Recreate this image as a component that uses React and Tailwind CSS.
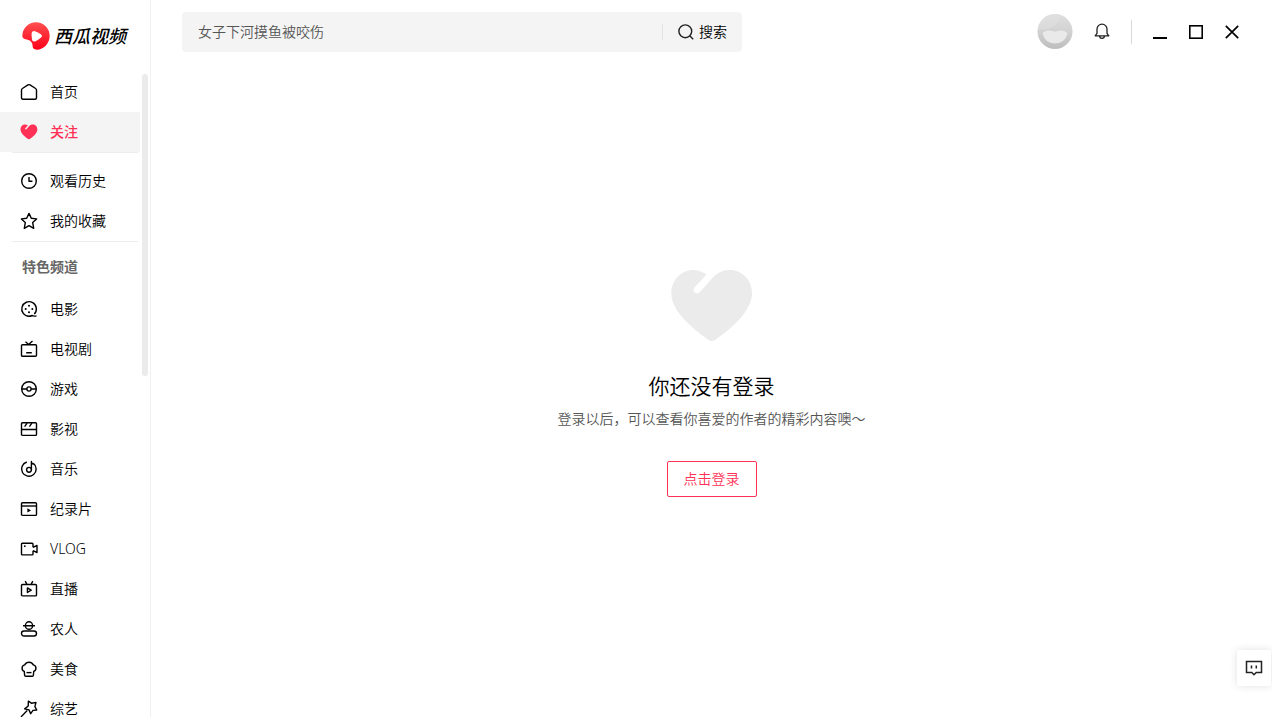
import React, { useState } from "react";

const HEART_PATH =
  "M35.5 5.5C31 2.5 27 1 22.5 1C10 1 .3 11 .3 24.5C.3 42 22 60 37.5 71Q40.7 73 44 71C60 60 81 42 81 24.5C81 11 71.5 1 58.5 1C51 1 46 4 41 9.5L28.5 23.5Q26.3 25.5 24 23.8Q21.5 21.5 23.3 18.8Z";

const icons = {
  home: (
    <path d="M1.5 7.1q0-1.1.9-1.6L8 1.9q1-.6 2 0l5.6 3.6q.9.5.9 1.6v7.6q0 1.5-1.5 1.5H3q-1.5 0-1.5-1.5z" />
  ),
  history: (
    <>
      <circle cx="9" cy="9" r="7.3" />
      <path d="M9 5v4.3h3.4" />
    </>
  ),
  star: (
    <path d="M9 1.4l2.3 4.8 5.3.7-3.9 3.7 1 5.7L9 13.6l-4.7 2.7 1-5.7L1.4 6.9l5.3-.7z" />
  ),
  movie: (
    <>
      <path d="M14.3 14.1a7.3 7.3 0 1 0-5.3 2.2q1.6 0 3.2-.8q1.2.9 4.3.4" />
      <g fill="currentColor" stroke="none">
        <circle cx="9" cy="5.7" r="1" />
        <circle cx="5.7" cy="9" r="1" />
        <circle cx="12.3" cy="9" r="1" />
        <circle cx="9" cy="12.3" r="1" />
      </g>
    </>
  ),
  tv: (
    <>
      <rect x="1.5" y="4.7" width="15" height="11.6" rx="1" />
      <path d="M5.5 1.7L8.7 4.6L12.5 1M6.2 12.7h5.6" />
    </>
  ),
  game: (
    <>
      <circle cx="9" cy="9" r="7.3" />
      <circle cx="9" cy="9" r="2.1" />
      <path d="M1.7 9h5.2M11.1 9h5.2" />
    </>
  ),
  film: (
    <>
      <rect x="1.5" y="2.7" width="15" height="12.7" rx="1" />
      <path d="M1.5 9.5h15M4.6 6.6l2.5-3.5M9.4 6.6l2.5-3.5" />
    </>
  ),
  music: (
    <>
      <path d="M6.8 2A7.3 7.3 0 1 0 13.3 3.2" />
      <circle cx="9" cy="9.8" r="2.4" />
      <path d="M11.4 9.8V1.5q.1 2.3 2.4 2.7" />
    </>
  ),
  documentary: (
    <>
      <rect x="1.5" y="2.7" width="15" height="12.7" rx="1" />
      <path d="M1.5 6h15" />
      <path d="M7.4 8.3l3.6 2.1-3.6 2.1z" fill="currentColor" stroke="none" />
    </>
  ),
  vlog: (
    <>
      <path d="M13 7.3V4.2q0-.9-.9-.9H2.4q-.9 0-.9.9v9.8q0 .9.9.9h9.7q.9 0 .9-.9v-3.3M13 7.3l4-1.8v7L13 10.7" />
      <circle cx="4.8" cy="6.2" r=".9" fill="currentColor" stroke="none" />
    </>
  ),
  live: (
    <>
      <rect x="1.5" y="4.5" width="15" height="11.4" rx="1" />
      <path d="M5.2 1.2l1.6 3M12.8 1.2l-1.6 3M7.4 7.9l3.8 2.3-3.8 2.3z" />
    </>
  ),
  farmer: (
    <>
      <path d="M5.4 5.7a3.6 3.9 0 0 1 7.2 0a3.6 3.6 0 0 1-7.2 0M3 5.7h12" />
      <rect x="1.5" y="11" width="15" height="5" rx="2.5" />
    </>
  ),
  food: (
    <>
      <path d="M4.3 11.4A3.4 3.4 0 0 1 4.7 4.9A4.8 4.8 0 0 1 13.3 4.9A3.4 3.4 0 0 1 13.7 11.4L13.4 15.2q-.1 1-1.1 1H5.7q-1 0-1.1-1z" />
      <path d="M6.5 12.6h5" />
    </>
  ),
  variety: (
    <path d="M8.4 1.1l3.3 2.2 4.3-.9-1.1 4.2 1.9 3.4-3.8.4-2.3 3.3-1.7-3.8-4.3-1L8.2 6zM7.2 10.5L1 16.9" />
  ),
};

const mainLinks = [
  { icon: "home", label: "首页" },
  { icon: "follow", label: "关注" },
];

const userLinks = [
  { icon: "history", label: "观看历史" },
  { icon: "star", label: "我的收藏" },
];

const channels = [
  { icon: "movie", label: "电影" },
  { icon: "tv", label: "电视剧" },
  { icon: "game", label: "游戏" },
  { icon: "film", label: "影视" },
  { icon: "music", label: "音乐" },
  { icon: "documentary", label: "纪录片" },
  { icon: "vlog", label: "VLOG" },
  { icon: "live", label: "直播" },
  { icon: "farmer", label: "农人" },
  { icon: "food", label: "美食" },
  { icon: "variety", label: "综艺" },
];

function NavIcon({ name }) {
  if (name === "follow") {
    return (
      <svg viewBox="-2 -4 86 82" className="h-[18px] w-[18px]" fill="currentColor">
        <path d={HEART_PATH} />
      </svg>
    );
  }
  return (
    <svg
      viewBox="0 0 18 18"
      className="h-[18px] w-[18px]"
      fill="none"
      stroke="currentColor"
      strokeWidth="1.4"
      strokeLinejoin="round"
    >
      {icons[name]}
    </svg>
  );
}

function NavList({ items, active, onSelect }) {
  return (
    <ul>
      {items.map((item) => (
        <li key={item.label}>
          <a
            href="#"
            onClick={() => onSelect(item.label)}
            className={
              active === item.label
                ? "flex h-10 items-center gap-3 bg-[#f4f4f4] pl-5 font-medium leading-4 text-[#ff3156]"
                : "flex h-10 items-center gap-3 pl-5 leading-4 text-black"
            }
          >
            <NavIcon name={item.icon} />
            <span>{item.label}</span>
          </a>
        </li>
      ))}
    </ul>
  );
}

function Logo() {
  return (
    <a href="#" className="flex h-[72px] shrink-0 items-center gap-1 pl-[22px]">
      <svg viewBox="0 0 82 82" className="h-7 w-7">
        <defs>
          <linearGradient id="logo" x1="0" y1="0" x2="0" y2="1">
            <stop offset="0" stopColor="#ff5050" />
            <stop offset="1" stopColor="#ff0018" />
          </linearGradient>
        </defs>
        <path
          fill="url(#logo)"
          d="M41 1A40 40 0 0 1 81 41C81 63 63 81 44 81C34 81 31 77 31 69C31 59 24 53 13 51C5 50 1 47 1 41A40 40 0 0 1 41 1Z"
        />
        <path
          fill="#fff"
          d="M28 34Q29 24 38 27Q47 30 55 36Q62 41 55 46Q47 53 38 57Q30 59 29 50Q28 42 28 34Z"
        />
      </svg>
      <span className="text-lg font-medium italic text-black">西瓜视频</span>
    </a>
  );
}

function Sidebar() {
  const [active, setActive] = useState("关注");

  return (
    <aside className="flex w-[151px] shrink-0 flex-col border-r border-[#f0f0f0]">
      <Logo />
      <div className="flex min-h-0 flex-1 gap-0.5">
        <nav className="w-[140px] overflow-hidden">
          <NavList items={mainLinks} active={active} onSelect={setActive} />
          <hr className="mb-2 ml-3 mr-0.5 border-[#ededed]" />
          <NavList items={userLinks} active={active} onSelect={setActive} />
          <hr className="ml-3 mr-0.5 border-[#ededed]" />
          <h2 className="pb-3 pl-[22px] pt-[15px] font-bold leading-5 text-[#666]">
            特色频道
          </h2>
          <NavList items={channels} active={active} onSelect={setActive} />
        </nav>
        <div className="w-1.5 pt-0.5">
          <div className="h-[47%] rounded-full bg-[#ebebeb]" />
        </div>
      </div>
    </aside>
  );
}

function Header() {
  return (
    <header className="flex h-16 shrink-0 items-center justify-between gap-8 pl-[31px] pr-[33px]">
      <form className="flex h-10 max-w-[560px] flex-1 items-center rounded bg-[#f4f4f4]">
        <input
          type="text"
          aria-label="搜索"
          placeholder="女子下河摸鱼被咬伤"
          className="min-w-0 flex-1 px-4 text-[#222] outline-none placeholder:text-[#555]"
        />
        <button
          type="button"
          className="flex h-4 items-center gap-[5px] border-l border-[#e4e4e4] px-[15px] text-black"
        >
          <svg
            viewBox="0 0 16 16"
            className="h-4 w-4"
            fill="none"
            stroke="#222"
            strokeWidth="1.4"
          >
            <circle cx="7.3" cy="7.3" r="6.4" />
            <path d="M11.9 11.9l3.3 3.3" />
          </svg>
          搜索
        </button>
      </form>

      <div className="flex items-center">
        <button type="button" aria-label="用户" className="mr-5">
          <svg viewBox="0 0 36 36" className="h-9 w-9">
            <defs>
              <linearGradient id="face" x1="0" y1="0" x2="0" y2="1">
                <stop offset="0" stopColor="#dedede" />
                <stop offset="0.5" stopColor="#d2d2d2" />
                <stop offset="1" stopColor="#bdbdbd" />
              </linearGradient>
            </defs>
            <circle cx="18" cy="17.5" r="17.5" fill="url(#face)" />
            <path d="M18 0A17.5 17.5 0 0 0 1 15Q18 18 25 1.5Q22 0 18 0Z" fill="#e2e2e2" opacity=".5" />
            <path
              d="M5.5 19Q9 15.5 14 16.8Q18 18 22 16.8Q27 15.5 30.5 19Q28 29.5 18 29.5Q8 29.5 5.5 19Z"
              fill="#e9e9e9"
            />
          </svg>
        </button>
        <button type="button" aria-label="通知" className="mr-5">
          <svg
            viewBox="0 0 18 18"
            className="h-[18px] w-[18px]"
            fill="none"
            stroke="#222"
            strokeWidth="1.3"
            strokeLinejoin="round"
          >
            <path d="M4 10.3V6.2a5 5 0 0 1 10 0v4.1l1.8 2.5H2.2zM6.6 13a2.4 2.4 0 0 0 4.8 0" />
          </svg>
        </button>
        <div className="mr-[21px] h-6 w-px bg-[#d8d8d8]" />
        <div className="flex gap-[22px] text-black">
          <button type="button" aria-label="最小化">
            <svg viewBox="0 0 14 14" className="h-3.5 w-3.5">
              <path d="M0 13h14" stroke="currentColor" strokeWidth="2" />
            </svg>
          </button>
          <button type="button" aria-label="最大化">
            <svg viewBox="0 0 14 14" className="h-3.5 w-3.5">
              <rect x=".8" y=".8" width="12.4" height="12.4" fill="none" stroke="currentColor" strokeWidth="1.6" />
            </svg>
          </button>
          <button type="button" aria-label="关闭">
            <svg viewBox="0 0 14 14" className="h-3.5 w-3.5">
              <path d="M.8.8l12.4 12.4M13.2.8L.8 13.2" stroke="currentColor" strokeWidth="1.7" />
            </svg>
          </button>
        </div>
      </div>
    </header>
  );
}

function LoginPrompt() {
  return (
    <main className="flex flex-1 flex-col items-center justify-center pb-4">
      <svg viewBox="0 0 82 72" className="h-[72px] w-[82px]" fill="#ebebeb">
        <path d={HEART_PATH} />
      </svg>
      <h1 className="mt-[30px] text-[21px] leading-[30px] text-black">你还没有登录</h1>
      <p className="mt-2 leading-5 text-[#555]">
        登录以后，可以查看你喜爱的作者的精彩内容噢～
      </p>
      <button
        type="button"
        className="mt-8 h-9 rounded-xs border border-[#ff3156] px-4 text-[#ff3156]"
      >
        点击登录
      </button>
    </main>
  );
}

function App() {
  return (
    <div className="flex h-screen overflow-hidden bg-white font-['Noto_Sans','Noto_Sans_CJK_SC',sans-serif] text-sm font-[350]">
      <Sidebar />
      <div className="flex min-w-0 flex-1 flex-col">
        <Header />
        <LoginPrompt />
      </div>
      <button
        type="button"
        aria-label="反馈"
        className="fixed bottom-[31px] right-px flex h-9 w-[34px] items-center justify-center rounded-xs bg-white shadow-[0_0_8px_rgba(0,0,0,0.12)]"
      >
        <svg
          viewBox="0 0 18 18"
          className="h-[18px] w-[18px]"
          fill="none"
          stroke="#222"
          strokeWidth="1.5"
        >
          <path d="M1.5 2.5h15v11h-5.3L9 15.7l-2.2-2.2H1.5zM6.5 6.5v3M11.3 6.5v3" />
        </svg>
      </button>
    </div>
  );
}

export default App;
